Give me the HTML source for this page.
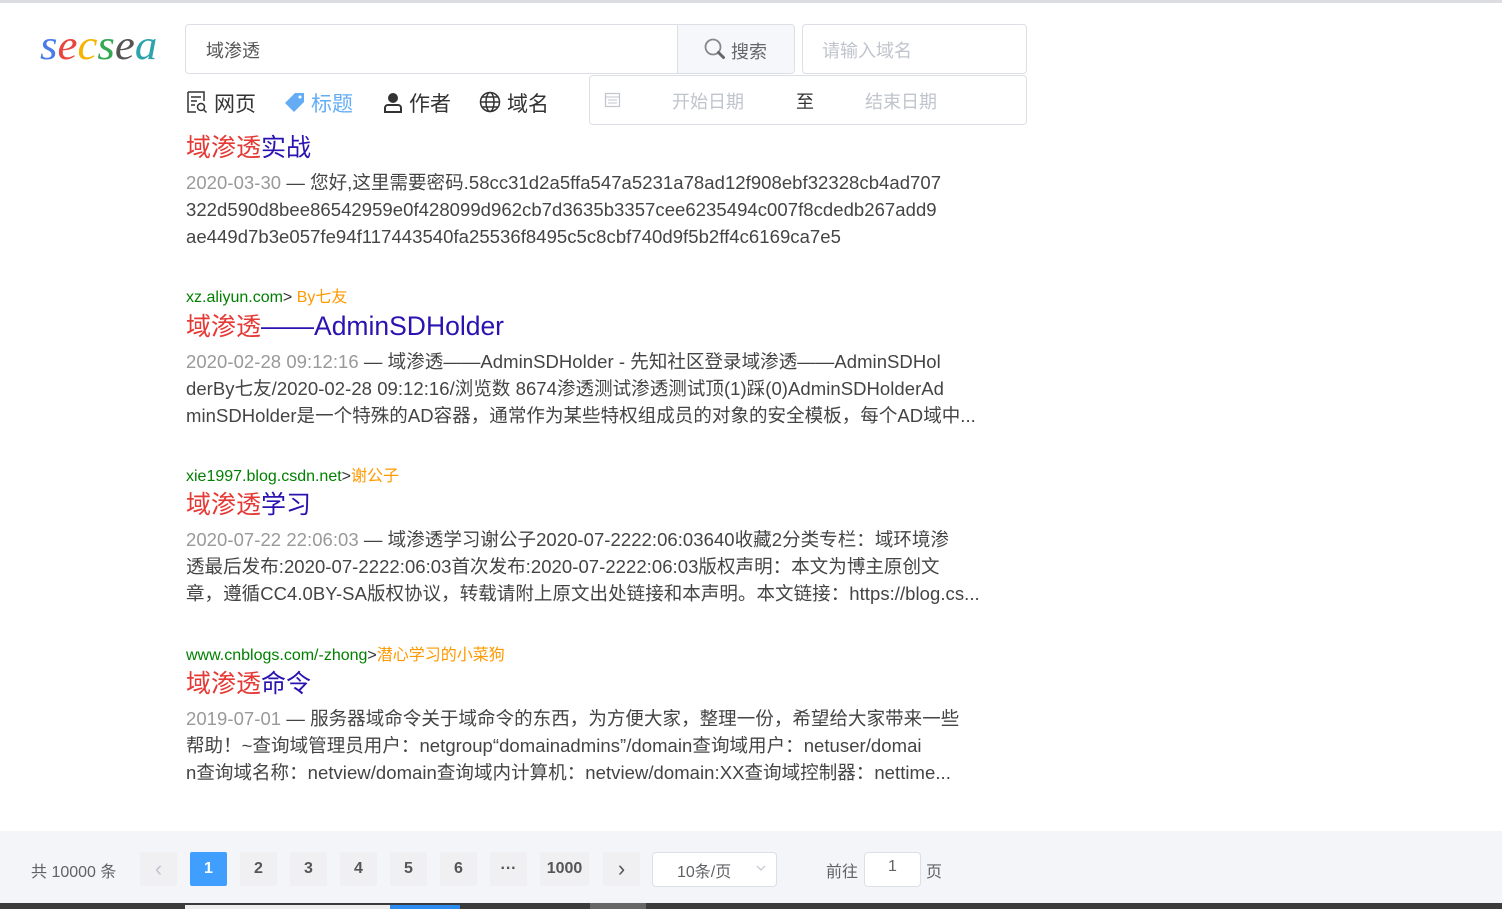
<!DOCTYPE html>
<html><head><meta charset="utf-8"><style>
*{margin:0;padding:0;box-sizing:border-box}
body{width:1502px;height:909px;overflow:hidden;background:#fff;font-family:"Liberation Sans","Noto Sans CJK SC",sans-serif;position:relative;color:#333}
.a{position:absolute}
.topline{top:0;left:0;width:1502px;height:3px;background:#dcdde3}
.logo{left:40px;top:22px;font-family:"Liberation Serif",serif;font-style:italic;font-size:42px;transform:scaleX(1.07);transform-origin:left}
.inp{border:1px solid #dcdfe6;border-radius:4px;background:#fff}
.res{left:186px;width:800px;white-space:nowrap}
.src{font-size:16px;color:#008000;height:22px;line-height:22px;margin-top:1px}
.src b{font-weight:normal;color:#333}
.src i{font-style:normal;color:#f90}
.t{font-size:25px;line-height:34px;color:#2a13b0}
.t em{font-style:normal;color:#e53935}
.t .l{font-size:26.5px}
.s{font-size:18.5px;line-height:27px;color:#444;margin-top:4px;letter-spacing:0.05px}
.s span{color:#999}
.pg{top:831px;left:0;width:1502px;height:72px;background:#f4f5f8}
.pb{top:852px;height:34px;background:#f0f0f3;border-radius:2px;font-size:16px;font-weight:bold;color:#555;text-align:center;line-height:34px}
</style></head><body>
<div class="a topline"></div>
<div class="a logo"><span style="color:#4a7be8">s</span><span style="color:#e8453c">e</span><span style="color:#f5b400">c</span><span style="color:#34a853">s</span><span style="color:#555">e</span><span style="color:#2ca3ad">a</span></div>
<div class="a inp" style="left:185px;top:24px;width:610px;height:50px"></div>
<div class="a" style="left:206px;top:37px;font-size:18px;color:#555">域渗透</div>
<div class="a" style="left:677px;top:25px;width:117px;height:48px;background:#f5f7fa;border-left:1px solid #dcdfe6;border-radius:0 4px 4px 0"></div>
<svg class="a" style="left:703px;top:37px" width="24" height="24" viewBox="0 0 24 24"><circle cx="10" cy="10" r="7.5" fill="none" stroke="#888" stroke-width="1.8"/><path d="M15.5 15.5l5 5" stroke="#666" stroke-width="3" stroke-linecap="round"/></svg>
<div class="a" style="left:731px;top:38px;font-size:18px;color:#666">搜索</div>
<div class="a inp" style="left:802px;top:24px;width:225px;height:50px"></div>
<div class="a" style="left:822px;top:37px;font-size:18px;color:#c0c4cc">请输入域名</div>
<div class="a inp" style="left:589px;top:75px;width:438px;height:50px"></div>
<svg class="a" style="left:604px;top:91px" width="17" height="17" viewBox="0 0 17 17"><rect x="1.5" y="2.5" width="14" height="13" fill="none" stroke="#c0c4cc" stroke-width="1.2"/><path d="M1.5 6h14M4 9h9M4 12h9" stroke="#c0c4cc" stroke-width="1"/></svg>
<div class="a" style="left:672px;top:88px;font-size:18px;color:#c0c4cc">开始日期</div>
<div class="a" style="left:796px;top:88px;font-size:18px;color:#333">至</div>
<div class="a" style="left:865px;top:88px;font-size:18px;color:#c0c4cc">结束日期</div>

<svg class="a" style="left:186px;top:91px" width="22" height="22" viewBox="0 0 22 22"><path d="M2 1h16v9M2 1v20h8M5 6h10M5 10h6M5 14h4" fill="none" stroke="#333" stroke-width="1.5"/><circle cx="15" cy="16" r="3.5" fill="none" stroke="#333" stroke-width="1.5"/><path d="M17.5 18.5l3 3" stroke="#333" stroke-width="1.5"/></svg>
<div class="a" style="left:214px;top:88px;font-size:21px;color:#333">网页</div>
<svg class="a" style="left:283px;top:91px" width="24" height="22" viewBox="0 0 24 22"><path d="M2 12L12 2h9v9L11 21z" fill="#64adf5"/><circle cx="17" cy="6" r="1.5" fill="#fff"/></svg>
<div class="a" style="left:311px;top:88px;font-size:21px;color:#64adf5">标题</div>
<svg class="a" style="left:383px;top:91px" width="20" height="22" viewBox="0 0 20 22"><circle cx="10" cy="7" r="5" fill="#333"/><path d="M2 21v-4a3 3 0 0 1 3-3h10a3 3 0 0 1 3 3v4z" fill="none" stroke="#333" stroke-width="2"/></svg>
<div class="a" style="left:409px;top:88px;font-size:21px;color:#333">作者</div>
<svg class="a" style="left:479px;top:91px" width="22" height="22" viewBox="0 0 22 22"><g fill="none" stroke="#333" stroke-width="1.5"><circle cx="11" cy="11" r="9.5"/><ellipse cx="11" cy="11" rx="4" ry="9.5"/><path d="M1.5 11h19M3 6h16M3 16h16"/></g></svg>
<div class="a" style="left:507px;top:88px;font-size:21px;color:#333">域名</div>

<div class="a res" style="top:131px"><div class="t"><em>域渗透</em>实战</div><div class="s"><span>2020-03-30</span> — 您好,这里需要密码.58cc31d2a5ffa547a5231a78ad12f908ebf32328cb4ad707<br>322d590d8bee86542959e0f428099d962cb7d3635b3357cee6235494c007f8cdedb267add9<br>ae449d7b3e057fe94f117443540fa25536f8495c5c8cbf740d9f5b2ff4c6169ca7e5</div></div>

<div class="a res" style="top:286px"><div class="src">xz.aliyun.com<b>&gt;</b> <i>By七友</i></div><div class="t"><em>域渗透</em><span class="l">——AdminSDHolder</span></div><div class="s"><span>2020-02-28 09:12:16</span> — 域渗透——AdminSDHolder - 先知社区登录域渗透——AdminSDHol<br>derBy七友/2020-02-28 09:12:16/浏览数 8674渗透测试渗透测试顶(1)踩(0)AdminSDHolderAd<br>minSDHolder是一个特殊的AD容器，通常作为某些特权组成员的对象的安全模板，每个AD域中...</div></div>

<div class="a res" style="top:465px"><div class="src">xie1997.blog.csdn.net<b>&gt;</b><i>谢公子</i></div><div class="t"><em>域渗透</em>学习</div><div class="s"><span>2020-07-22 22:06:03</span> — 域渗透学习谢公子2020-07-2222:06:03640收藏2分类专栏：域环境渗<br>透最后发布:2020-07-2222:06:03首次发布:2020-07-2222:06:03版权声明：本文为博主原创文<br>章，遵循CC4.0BY-SA版权协议，转载请附上原文出处链接和本声明。本文链接：https://blog.cs...</div></div>

<div class="a res" style="top:644px"><div class="src">www.cnblogs.com/-zhong<b>&gt;</b><i>潜心学习的小菜狗</i></div><div class="t"><em>域渗透</em>命令</div><div class="s"><span>2019-07-01</span> — 服务器域命令关于域命令的东西，为方便大家，整理一份，希望给大家带来一些<br>帮助！~查询域管理员用户：netgroup“domainadmins”/domain查询域用户：netuser/domai<br>n查询域名称：netview/domain查询域内计算机：netview/domain:XX查询域控制器：nettime...</div></div>

<div class="a pg"></div>
<div class="a" style="left:31px;top:858px;font-size:16px;color:#606266">共 10000 条</div>
<div class="a pb" style="left:140px;width:37px;color:#c0c4cc;font-weight:normal;font-size:22px">‹</div>
<div class="a pb" style="left:190px;width:37px;background:#409eff;color:#fff">1</div>
<div class="a pb" style="left:240px;width:37px">2</div>
<div class="a pb" style="left:290px;width:37px">3</div>
<div class="a pb" style="left:340px;width:37px">4</div>
<div class="a pb" style="left:390px;width:37px">5</div>
<div class="a pb" style="left:440px;width:37px">6</div>
<div class="a pb" style="left:490px;width:37px">···</div>
<div class="a pb" style="left:540px;width:49px">1000</div>
<div class="a pb" style="left:603px;width:37px;font-weight:normal;font-size:22px">›</div>
<div class="a inp" style="left:652px;top:852px;width:125px;height:35px"></div>
<div class="a" style="left:677px;top:858px;font-size:16px;color:#606266">10条/页</div>
<svg class="a" style="left:756px;top:865px" width="10" height="7" viewBox="0 0 10 7"><path d="M1 1l4 4 4-4" fill="none" stroke="#c0c4cc" stroke-width="1.2"/></svg>
<div class="a" style="left:826px;top:858px;font-size:16px;color:#606266">前往</div>
<div class="a inp" style="left:864px;top:852px;width:57px;height:35px"></div>
<div class="a" style="left:888px;top:858px;font-size:16px;color:#606266">1</div>
<div class="a" style="left:926px;top:858px;font-size:16px;color:#606266">页</div>
<div class="a" style="left:0;top:903px;width:1502px;height:6px;background:#3b3b3b"></div>
<div class="a" style="left:185px;top:905px;width:205px;height:4px;background:#eee"></div>
<div class="a" style="left:390px;top:905px;width:70px;height:4px;background:#2d8cf0"></div>
<div class="a" style="left:590px;top:903px;width:56px;height:6px;background:#666"></div>
</body></html>
